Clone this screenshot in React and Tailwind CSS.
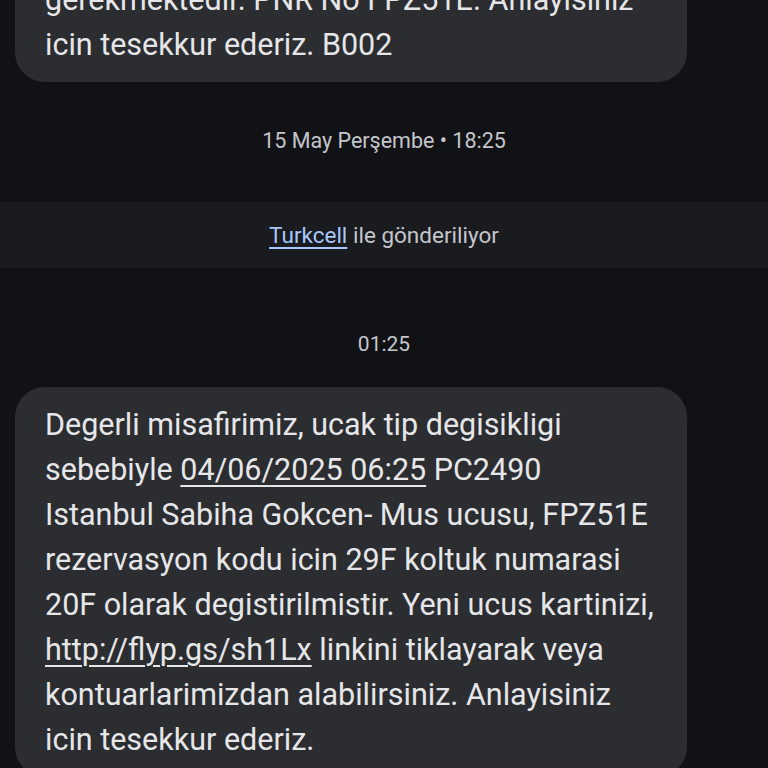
// Messages thread - dark conversation view

import React from "react";

const previousLines = [
  "gerekmektedir. PNR No FPZ51E. Anlayisiniz",
  "icin tesekkur ederiz. B002",
];

function Bubble({ children, className = "" }) {
  return (
    <div
      className={`ml-[15px] w-[672px] rounded-[30px] bg-[#2b2d31] px-[30px] py-[15px] text-[30.5px] leading-[45px] text-[#e6e6e8] ${className}`}
    >
      {children}
    </div>
  );
}

export default function App() {
  return (
    <div
      className="h-[768px] w-[768px] overflow-hidden bg-[#111216]"
      style={{ fontFamily: "Roboto, 'Noto Sans', sans-serif" }}
    >
      {/* Earlier message, cut off by the top edge */}
      <Bubble className="-mt-[38px]">
        {previousLines.map((line) => (
          <div key={line} className="whitespace-nowrap">{line}</div>
        ))}
      </Bubble>

      {/* Date divider */}
      <div className="mt-[44px] text-center text-[21.5px] leading-[30px] text-[#c4c6cb]">
        15 May Perşembe • 18:25
      </div>

      {/* Carrier band */}
      <div className="mt-[46px] bg-[#1a1b1f] py-[18px] text-center text-[22.5px] leading-[30px] text-[#c4c6cb]">
        <span className="text-[#a8c7fa] underline decoration-[2px] underline-offset-[4px]">Turkcell</span>{" "}
        ile gönderiliyor
      </div>

      {/* Time */}
      <div className="mt-[61px] text-center text-[21px] leading-[30px] text-[#c4c6cb]">
        01:25
      </div>

      {/* Latest message */}
      <Bubble className="mt-[28px]">
        <div className="whitespace-nowrap">Degerli misafirimiz, ucak tip degisikligi</div>
        <div className="whitespace-nowrap">
          sebebiyle{" "}
          <span className="underline decoration-[2px] underline-offset-[5px]">04/06/2025 06:25</span>{" "}
          PC2490
        </div>
        <div className="whitespace-nowrap">Istanbul Sabiha Gokcen- Mus ucusu, FPZ51E</div>
        <div className="whitespace-nowrap">rezervasyon kodu icin 29F koltuk numarasi</div>
        <div className="whitespace-nowrap">20F olarak degistirilmistir. Yeni ucus kartinizi,</div>
        <div className="whitespace-nowrap">
          <span className="underline decoration-[2px] underline-offset-[5px]">http://flyp.gs/sh1Lx</span>{" "}
          linkini tiklayarak veya
        </div>
        <div className="whitespace-nowrap">kontuarlarimizdan alabilirsiniz. Anlayisiniz</div>
        <div className="whitespace-nowrap">icin tesekkur ederiz.</div>
      </Bubble>
    </div>
  );
}
